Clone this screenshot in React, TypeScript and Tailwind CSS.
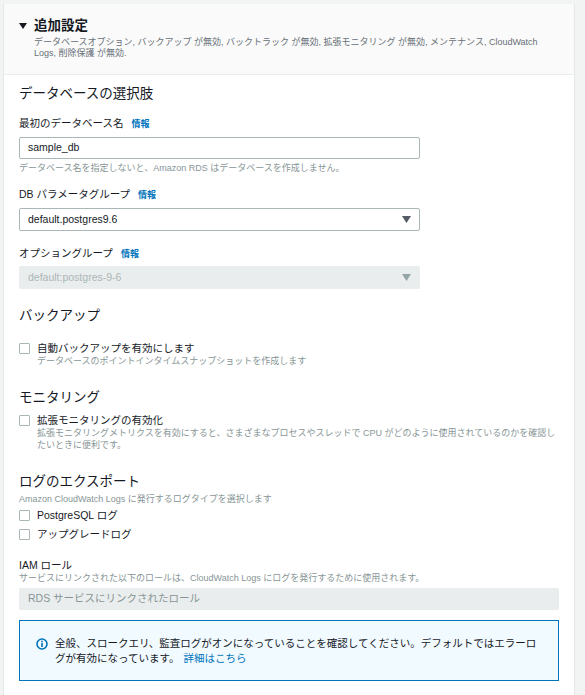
function Info() {
  return <span className="ml-[8px] text-[9px] font-bold text-[#0073bb]">情報</span>;
}

function Label({ text }: { text: string }) {
  return (
    <div className="text-[10.5px] leading-[14px] text-[#16191f]">
      {text}
      <Info />
    </div>
  );
}

function Section({ text, className }: { text: string; className: string }) {
  return <h2 className={`text-[13.5px] font-normal leading-[18px] text-[#16191f] ${className}`}>{text}</h2>;
}

function SelectBox({ value, disabled }: { value: string; disabled?: boolean }) {
  return (
    <div
      className={
        disabled
          ? "flex h-[23px] w-[401px] items-center justify-between rounded-[2px] bg-[#eaeded] pl-[9px] pr-[9px] text-[10.5px] text-[#aab7b8]"
          : "flex h-[23px] w-[401px] items-center justify-between rounded-[2px] border border-[#aab7b8] bg-white pl-[8px] pr-[8px] text-[10.5px] text-[#16191f]"
      }
    >
      <span>{value}</span>
      <svg width="9" height="7" viewBox="0 0 9 7" className={disabled ? "text-[#95a5a6]" : "text-[#545b64]"}>
        <path d="M0 0H9L4.5 7Z" fill="currentColor" />
      </svg>
    </div>
  );
}

function Check({ label, hint }: { label: string; hint?: string }) {
  return (
    <div className="flex">
      <div className="mt-[2px] box-border h-[11px] w-[11px] shrink-0 rounded-[1px] border border-[#aab7b8] bg-white" />
      <div className="ml-[7px]">
        <div className="text-[10.5px] leading-[14px] text-[#16191f]">{label}</div>
        {hint && <div className="text-[9px] leading-[12px] text-[#879596]">{hint}</div>}
      </div>
    </div>
  );
}

export default function App() {
  return (
    <div className="h-[695px] w-[585px] overflow-hidden bg-[#f2f3f3] pl-[3px] pt-[4px] font-['Liberation_Sans','Noto_Sans_CJK_JP',sans-serif]">
      <div className="h-[720px] w-[572px] border-x border-[#e4e7e7] bg-white">
        <div className="h-[71px] border-b border-[#eaeded] bg-[#fafafa] pl-[15px] pt-[12px]">
          <div className="flex h-[20px] items-center">
            <svg width="8" height="6" viewBox="0 0 8 6" className="mr-[7px] text-[#16191f]">
              <path d="M0 0H8L4 6Z" fill="currentColor" />
            </svg>
            <span className="text-[13.5px] font-bold leading-[20px] text-[#16191f]">追加設定</span>
          </div>
          <p className="mt-[1px] w-[520px] pl-[15px] text-[9px] leading-[11px] text-[#687078]">
            データベースオプション, バックアップ が無効, バックトラック が無効, 拡張モニタリング が無効, メンテナンス, CloudWatch Logs, 削除保護 が無効.
          </p>
        </div>

        <div className="pl-[15px]">
          <Section text="データベースの選択肢" className="mt-[10px]" />
          <div className="mt-[13px]">
            <Label text="最初のデータベース名" />
          </div>
          <div className="mt-[6px] flex h-[22px] w-[401px] items-center rounded-[2px] border border-[#aab7b8] bg-white pl-[8px] text-[10.5px] text-[#16191f]">
            sample_db
          </div>
          <p className="mt-[3px] text-[9px] leading-[12px] text-[#879596]">
            データベース名を指定しないと、Amazon RDS はデータベースを作成しません。
          </p>

          <div className="mt-[13px]">
            <Label text="DB パラメータグループ" />
          </div>
          <div className="mt-[6px]">
            <SelectBox value="default.postgres9.6" />
          </div>

          <div className="mt-[15px]">
            <Label text="オプショングループ" />
          </div>
          <div className="mt-[5px]">
            <SelectBox value="default:postgres-9-6" disabled />
          </div>

          <Section text="バックアップ" className="mt-[18px]" />
          <div className="mt-[16px]">
            <Check label="自動バックアップを有効にします" hint="データベースのポイントインタイムスナップショットを作成します" />
          </div>

          <Section text="モニタリング" className="mt-[22px]" />
          <div className="mt-[6px] w-[540px]">
            <Check
              label="拡張モニタリングの有効化"
              hint="拡張モニタリングメトリクスを有効にすると、さまざまなプロセスやスレッドで CPU がどのように使用されているのかを確認したいときに便利です。"
            />
          </div>

          <Section text="ログのエクスポート" className="mt-[22px]" />
          <p className="mt-[2px] text-[9px] leading-[12px] text-[#879596]">
            Amazon CloudWatch Logs に発行するログタイプを選択します
          </p>
          <div className="mt-[3px]">
            <Check label="PostgreSQL ログ" />
          </div>
          <div className="mt-[5px]">
            <Check label="アップグレードログ" />
          </div>

          <div className="mt-[17px] text-[10.5px] leading-[14px] text-[#16191f]">IAM ロール</div>
          <p className="text-[9px] leading-[12px] text-[#879596]">
            サービスにリンクされた以下のロールは、CloudWatch Logs にログを発行するために使用されます。
          </p>
          <div className="mt-[4px] flex h-[22px] w-[540px] items-center rounded-[2px] bg-[#eaeded] pl-[9px] text-[10.5px] text-[#879596]">
            RDS サービスにリンクされたロール
          </div>

          <div className="mt-[10px] flex h-[61px] w-[540px] border border-[#0073bb] bg-[#f1faff] pl-[16px] pr-[14px] pt-[15px]">
            <svg width="12" height="12" viewBox="0 0 12 12" className="mt-[2px] shrink-0 text-[#0073bb]">
              <circle cx="6" cy="6" r="5" fill="none" stroke="currentColor" strokeWidth="1.6" />
              <rect x="5.2" y="2.7" width="1.6" height="1.6" fill="currentColor" />
              <rect x="5.2" y="5" width="1.6" height="4" fill="currentColor" />
            </svg>
            <p className="ml-[7px] text-[10.5px] leading-[15px] text-[#16191f]">
              全般、スロークエリ、監査ログがオンになっていることを確認してください。デフォルトではエラーログが有効になっています。
              <span className="ml-[4px] text-[#0073bb]">詳細はこちら</span>
            </p>
          </div>
        </div>
      </div>
    </div>
  );
}
